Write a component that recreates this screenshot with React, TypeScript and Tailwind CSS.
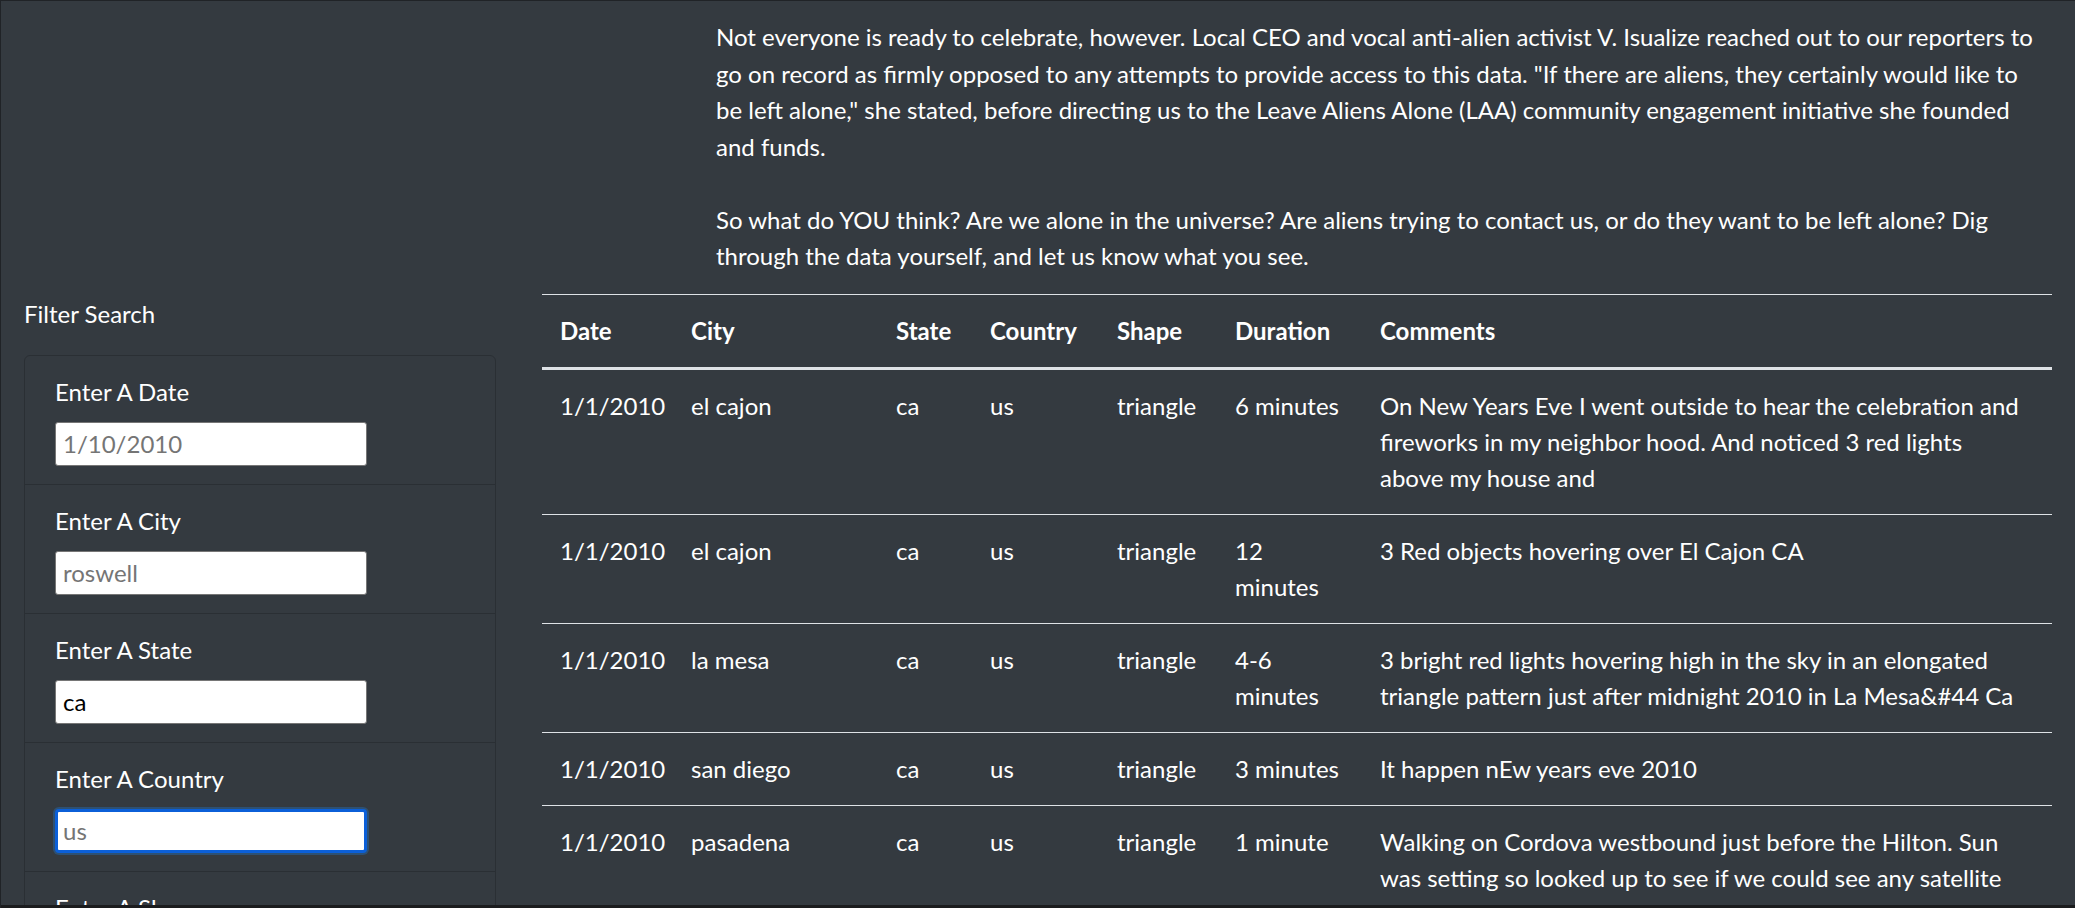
type Sighting = {
  date: string;
  city: string;
  state: string;
  country: string;
  shape: string;
  duration: string;
  comments: string[];
};

// comment lines are kept as the source wrapped them
const sightings: Sighting[] = [
  {
    date: "1/1/2010",
    city: "el cajon",
    state: "ca",
    country: "us",
    shape: "triangle",
    duration: "6 minutes",
    comments: [
      "On New Years Eve I went outside to hear the celebration and",
      "fireworks in my neighbor hood. And noticed 3 red lights",
      "above my house and",
    ],
  },
  {
    date: "1/1/2010",
    city: "el cajon",
    state: "ca",
    country: "us",
    shape: "triangle",
    duration: "12 minutes",
    comments: ["3 Red objects hovering over El Cajon CA"],
  },
  {
    date: "1/1/2010",
    city: "la mesa",
    state: "ca",
    country: "us",
    shape: "triangle",
    duration: "4-6 minutes",
    comments: [
      "3 bright red lights hovering high in the sky in an elongated",
      "triangle pattern just after midnight 2010 in La Mesa&#44 Ca",
    ],
  },
  {
    date: "1/1/2010",
    city: "san diego",
    state: "ca",
    country: "us",
    shape: "triangle",
    duration: "3 minutes",
    comments: ["It happen nEw years eve 2010"],
  },
  {
    date: "1/1/2010",
    city: "pasadena",
    state: "ca",
    country: "us",
    shape: "triangle",
    duration: "1 minute",
    comments: [
      "Walking on Cordova westbound just before the Hilton. Sun",
      "was setting so looked up to see if we could see any satellite",
    ],
  },
];

const intro = [
  "Not everyone is ready to celebrate, however. Local CEO and vocal anti-alien activist V. Isualize reached out to our reporters to",
  'go on record as firmly opposed to any attempts to provide access to this data. "If there are aliens, they certainly would like to',
  'be left alone," she stated, before directing us to the Leave Aliens Alone (LAA) community engagement initiative she founded',
  "and funds.",
  "",
  "So what do YOU think? Are we alone in the universe? Are aliens trying to contact us, or do they want to be left alone? Dig",
  "through the data yourself, and let us know what you see.",
];

const filters = [
  { label: "Enter A Date", placeholder: "1/10/2010", value: "" },
  { label: "Enter A City", placeholder: "roswell", value: "" },
  { label: "Enter A State", placeholder: "ca", value: "ca" },
  { label: "Enter A Country", placeholder: "us", value: "", focused: true },
  { label: "Enter A Shape", placeholder: "triangle", value: "" },
];

const columns = [
  { name: "Date", width: "w-[131px]" },
  { name: "City", width: "w-[205px]" },
  { name: "State", width: "w-[94px]" },
  { name: "Country", width: "w-[127px]" },
  { name: "Shape", width: "w-[118px]" },
  { name: "Duration", width: "w-[145px]" },
  { name: "Comments", width: "w-[690px]" },
];

export default function App() {
  return (
    <div className="flex h-[908px] flex-col overflow-hidden border-t border-l border-[#202327] bg-[#343a40] font-[Lato,sans-serif] text-[24px] leading-[36px] text-white">
      <div className="flex-1 overflow-hidden">
        <p className="mb-[19px] ml-[715px] w-[1336px] pt-[18px] leading-[36.5px]">
          {intro.map((l, i) => (
            <span key={i} className="block min-h-[36.5px] whitespace-nowrap">
              {l}
            </span>
          ))}
        </p>

        <div className="flex">
          <aside className="w-[541px] shrink-0 pl-[23px] pt-[2px]">
            <div>Filter Search</div>
            <ul className="mt-[23px] w-[472px] rounded-[6px] border border-[#2a2f34]">
              {filters.map((f, i) => (
                <li
                  key={f.label}
                  className={`px-[30px] py-[18px] ${i > 0 ? "border-t border-[#2a2f34]" : ""}`}
                >
                  <label className="mb-[12px] block">{f.label}</label>
                  <input
                    readOnly
                    value={f.value}
                    placeholder={f.placeholder}
                    className={
                      f.focused
                        ? "h-[44px] w-[312px] rounded-[4px] border-[3px] border-[#0b5fd8] bg-white px-[5px] text-[24px] text-black shadow-[0_0_0_2px_#2d5073] outline-none placeholder:text-[#757575]"
                        : "h-[44px] w-[312px] rounded-[3px] border border-[#767676] bg-white px-[7px] text-[24px] text-black outline-none placeholder:text-[#757575]"
                    }
                  />
                </li>
              ))}
            </ul>
          </aside>

          <div className="w-[1510px] shrink-0">
            <table className="w-[1510px] table-fixed border-collapse">
              <thead>
                <tr className="border-t border-[#dee2e6]">
                  {columns.map((c) => (
                    <th
                      key={c.name}
                      className={`${c.width} border-b-[3px] border-[#dee2e6] p-[18px] text-left align-bottom font-bold`}
                    >
                      {c.name}
                    </th>
                  ))}
                </tr>
              </thead>
              <tbody>
                {sightings.map((s, i) => (
                  <tr key={i} className={i > 0 ? "border-t border-[#dee2e6]" : ""}>
                    <td className="p-[18px] align-top">{s.date}</td>
                    <td className="p-[18px] align-top">{s.city}</td>
                    <td className="p-[18px] align-top">{s.state}</td>
                    <td className="p-[18px] align-top">{s.country}</td>
                    <td className="p-[18px] align-top">{s.shape}</td>
                    <td className="p-[18px] align-top">{s.duration}</td>
                    <td className="p-[18px] align-top">
                      {s.comments.map((l, j) => (
                        <span key={j} className="block whitespace-nowrap">
                          {l}
                        </span>
                      ))}
                    </td>
                  </tr>
                ))}
              </tbody>
            </table>
          </div>
        </div>
      </div>
      <div className="h-[3px] shrink-0 bg-[#1b1c1e]" />
    </div>
  );
}
